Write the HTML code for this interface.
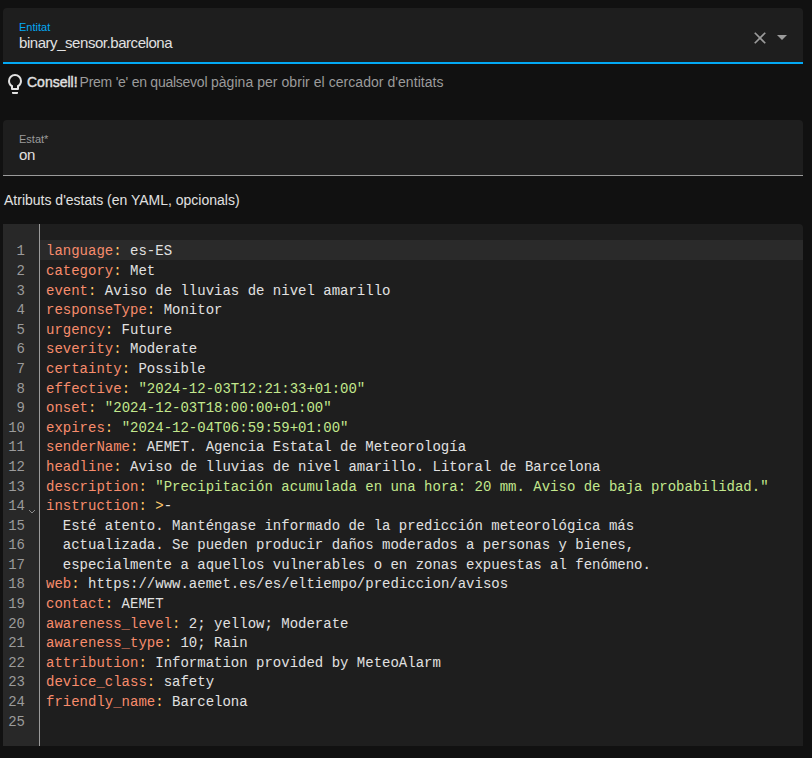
<!DOCTYPE html>
<html><head><meta charset="utf-8">
<style>
html,body{margin:0;padding:0;}
body{width:812px;height:758px;overflow:hidden;background:#111111;position:relative;font-family:"Liberation Sans",sans-serif;color:#e1e1e1;}
.abs{position:absolute;}
.tf{position:absolute;left:3px;width:800px;height:56px;background:#1e1e1e;border-radius:4px 4px 0 0;}
.tf .lbl{position:absolute;left:16px;font-size:11px;line-height:12px;white-space:nowrap;}
.tf .val{position:absolute;left:16px;font-size:15px;line-height:16px;letter-spacing:-0.45px;white-space:nowrap;color:#e1e1e1;}
#tf1{top:8px;}
#tf1 .ul{position:absolute;left:0;right:0;bottom:0;height:2px;background:#03a9f4;}
#tf1 .lbl{top:13px;color:#03a9f4;}
#tf1 .val{top:27px;}
#tf2{top:120px;}
#tf2 .ul{position:absolute;left:0;right:0;bottom:0;height:1px;background:#9b9b9b;}
#tf2 .lbl{top:13px;color:#9b9b9b;}
#tf2 .val{top:27px;}
.help{position:absolute;left:27px;top:74px;font-size:14px;line-height:16px;white-space:nowrap;color:#9b9b9b;letter-spacing:0.05px;}
.help b{color:#e1e1e1;font-weight:normal;-webkit-text-stroke:0.4px #e1e1e1;letter-spacing:0px;}
.attr{position:absolute;left:4px;top:192px;font-size:14px;line-height:16px;white-space:nowrap;color:#e1e1e1;}
#ed{position:absolute;left:3px;top:224px;width:800px;height:522px;background:#1e1e1e;border-radius:0 4px 0 0;overflow:hidden;}
#gut{position:absolute;left:0;top:0;width:36px;height:522px;background:#282828;}
#gline{position:absolute;left:36px;top:0;width:1px;height:522px;background:#9b9b9b;}
#act{position:absolute;left:37px;top:16px;right:0;height:19.6px;background:#2a2a2a;}
.nums{position:absolute;left:0;top:18.4px;width:22px;text-align:right;font-family:"Liberation Mono",monospace;font-size:14px;line-height:19.6px;color:#9b9b9b;}
.code{position:absolute;left:43px;top:18.4px;font-family:"Liberation Mono",monospace;font-size:14px;line-height:19.6px;white-space:pre;color:#e1e1e1;}
.k{color:#f78c6c;}
.p{color:#ffcb6b;}
.s{color:#c3e88d;}
</style></head><body>
<div class="tf" id="tf1">
  <div class="lbl">Entitat</div>
  <div class="val">binary_sensor.barcelona</div>
  <svg class="abs" style="left:747px;top:20px" width="20" height="20" viewBox="0 0 24 24"><path fill="#9b9b9b" d="M19,6.41L17.59,5L12,10.59L6.41,5L5,6.41L10.59,12L5,17.59L6.41,19L12,13.41L17.59,19L19,17.59L13.41,12L19,6.41Z"/></svg>
  <svg class="abs" style="left:767px;top:17px" width="24" height="24" viewBox="0 0 24 24"><path fill="#9b9b9b" d="M7,10L12,15L17,10H7Z"/></svg>
  <div class="ul"></div>
</div>
<svg class="abs" style="left:3px;top:72px" width="24" height="24" viewBox="0 0 24 24"><path fill="#e1e1e1" d="M12,2A7,7 0 0,1 19,9C19,11.38 17.81,13.47 16,14.74V17A1,1 0 0,1 15,18H9A1,1 0 0,1 8,17V14.74C6.19,13.47 5,11.38 5,9A7,7 0 0,1 12,2M9,21V20H15V21A1,1 0 0,1 14,22H10A1,1 0 0,1 9,21M12,4A5,5 0 0,0 7,9C7,11.05 8.23,12.81 10,13.58V16H14V13.58C15.77,12.81 17,11.05 17,9A5,5 0 0,0 12,4Z"/></svg>
<div class="help"><b>Consell!</b><span style="word-spacing:-2px"> </span><span style="letter-spacing:-0.25px">Prem 'e' en qualsevol </span>pàgina per obrir el cercador d'entitats</div>
<div class="tf" id="tf2">
  <div class="lbl">Estat*</div>
  <div class="val">on</div>
  <div class="ul"></div>
</div>
<div class="attr">Atributs d'estats (en YAML, opcionals)</div>
<div id="ed">
  <div id="gut"></div>
  <div id="gline"></div>
  <div id="act"></div>
  <svg class="abs" style="left:25px;top:285px" width="10" height="6" viewBox="0 0 10 6"><polyline points="1,1 4,4 7,1" fill="none" stroke="#8a8a8a" stroke-width="1"/></svg>
  <div class="nums">1<br>2<br>3<br>4<br>5<br>6<br>7<br>8<br>9<br>10<br>11<br>12<br>13<br>14<br>15<br>16<br>17<br>18<br>19<br>20<br>21<br>22<br>23<br>24<br>25</div>
  <div class="code"><span class="k">language</span><span class="p">:</span> es-ES
<span class="k">category</span><span class="p">:</span> Met
<span class="k">event</span><span class="p">:</span> Aviso de lluvias de nivel amarillo
<span class="k">responseType</span><span class="p">:</span> Monitor
<span class="k">urgency</span><span class="p">:</span> Future
<span class="k">severity</span><span class="p">:</span> Moderate
<span class="k">certainty</span><span class="p">:</span> Possible
<span class="k">effective</span><span class="p">:</span> <span class="s">"2024-12-03T12:21:33+01:00"</span>
<span class="k">onset</span><span class="p">:</span> <span class="s">"2024-12-03T18:00:00+01:00"</span>
<span class="k">expires</span><span class="p">:</span> <span class="s">"2024-12-04T06:59:59+01:00"</span>
<span class="k">senderName</span><span class="p">:</span> AEMET. Agencia Estatal de Meteorología
<span class="k">headline</span><span class="p">:</span> Aviso de lluvias de nivel amarillo. Litoral de Barcelona
<span class="k">description</span><span class="p">:</span> <span class="s">"Precipitación acumulada en una hora: 20 mm. Aviso de baja probabilidad."</span>
<span class="k">instruction</span><span class="p">:</span> <span class="p">&gt;</span>-
  Esté atento. Manténgase informado de la predicción meteorológica más
  actualizada. Se pueden producir daños moderados a personas y bienes,
  especialmente a aquellos vulnerables o en zonas expuestas al fenómeno.
<span class="k">web</span><span class="p">:</span> https://www.aemet.es/es/eltiempo/prediccion/avisos
<span class="k">contact</span><span class="p">:</span> AEMET
<span class="k">awareness_level</span><span class="p">:</span> 2; yellow; Moderate
<span class="k">awareness_type</span><span class="p">:</span> 10; Rain
<span class="k">attribution</span><span class="p">:</span> Information provided by MeteoAlarm
<span class="k">device_class</span><span class="p">:</span> safety
<span class="k">friendly_name</span><span class="p">:</span> Barcelona
</div>
</div>
</body></html>
